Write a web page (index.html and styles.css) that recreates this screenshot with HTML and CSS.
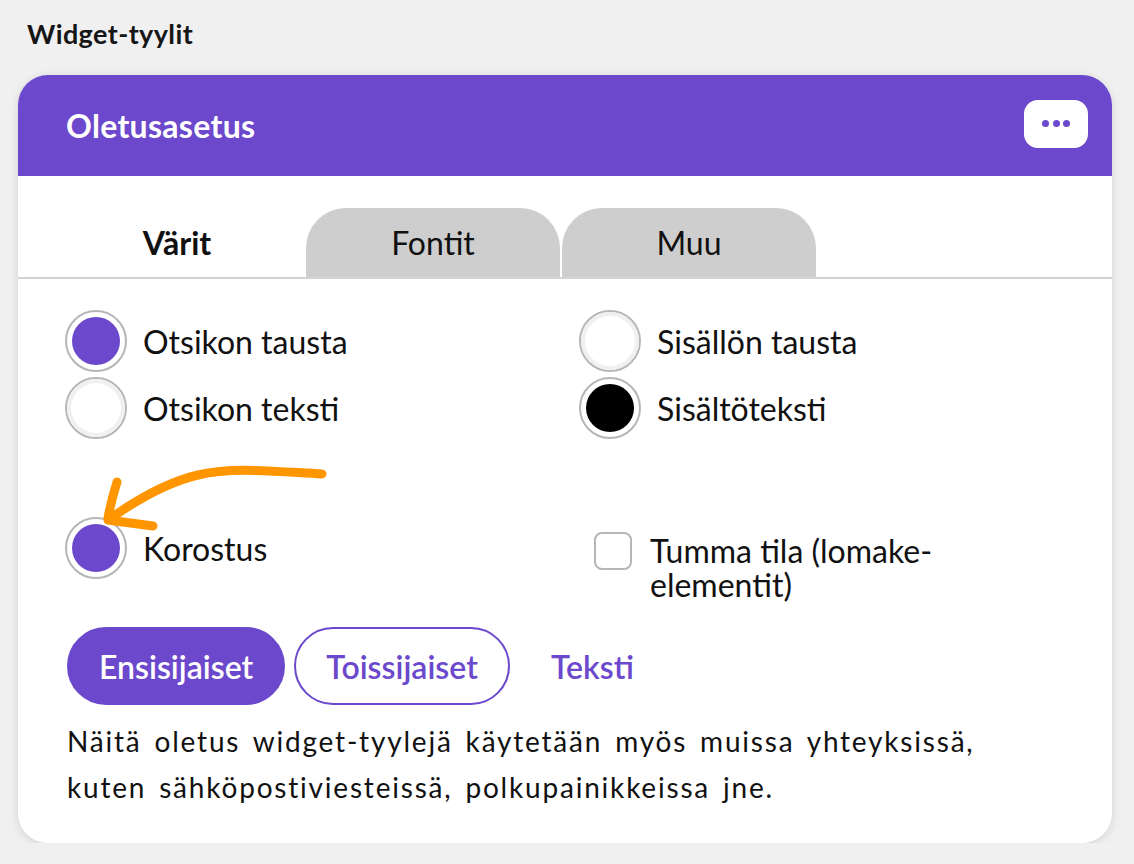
FILE: index.html
```html
<!DOCTYPE html>
<html lang="fi">
<head>
<meta charset="utf-8">
<title>Widget-tyylit</title>
<link rel="stylesheet" href="styles.css">
</head>
<body>
<h1 class="page-title">Widget-tyylit</h1>
<div class="card">
  <div class="card-header">
    <span class="card-title">Oletusasetus</span>
    <button class="menu-btn" type="button" aria-label="Lisää"><span class="dot"></span><span class="dot"></span><span class="dot"></span></button>
  </div>
  <div class="tabs">
    <div class="tab active">Värit</div>
    <div class="tab">Fontit</div>
    <div class="tab">Muu</div>
  </div>
  <div class="card-body">
    <div class="swatch-grid">
      <div class="swatch-item"><span class="swatch"><span class="fill purple"></span></span><span class="label">Otsikon tausta</span></div>
      <div class="swatch-item"><span class="swatch"><span class="fill white"></span></span><span class="label">Sisällön tausta</span></div>
      <div class="swatch-item"><span class="swatch"><span class="fill white"></span></span><span class="label">Otsikon teksti</span></div>
      <div class="swatch-item"><span class="swatch"><span class="fill black"></span></span><span class="label">Sisältöteksti</span></div>
    </div>
    <div class="swatch-grid accent-row">
      <div class="swatch-item"><span class="swatch"><span class="fill purple"></span></span><span class="label">Korostus</span></div>
      <div class="check-item"><span class="checkbox"></span><span class="check-label">Tumma tila (lomake-elementit)</span></div>
    </div>
    <div class="buttons">
      <button class="btn primary" type="button">Ensisijaiset</button>
      <button class="btn secondary" type="button">Toissijaiset</button>
      <button class="btn text" type="button">Teksti</button>
    </div>
    <p class="note">Näitä oletus widget-tyylejä käytetään myös muissa yhteyksissä,<br>kuten sähköpostiviesteissä, polkupainikkeissa jne.</p>
  </div>
  <svg class="annotation" width="340" height="480" viewBox="0 0 340 480" aria-hidden="true">
    <path d="M304 399 C250 396 215 392 180 400 C150 407 120 424 93 443" fill="none" stroke="#ff9600" stroke-width="9" stroke-linecap="round"/>
    <path d="M99 407 C95 420 92 432 90 443" fill="none" stroke="#ff9600" stroke-width="9" stroke-linecap="round"/>
    <path d="M90 445 L135 451" fill="none" stroke="#ff9600" stroke-width="9" stroke-linecap="round"/>
  </svg>
</div>
</body>
</html>
```

FILE: styles.css
```css
* { box-sizing: border-box; }

html, body {
  margin: 0;
  background: #f0f0f0;
}

body {
  padding: 18px 22px 0 18px;
  font-family: Lato, "Open Sans", sans-serif;
  color: #111;
}

.page-title {
  margin: 0 0 25px 9px;
  font-size: 27px;
  line-height: 32px;
  font-weight: 700;
  letter-spacing: 0.4px;
  color: #161616;
}

.card {
  position: relative;
  width: 1094px;
  background: #fff;
  border-radius: 30px;
  overflow: hidden;
  box-shadow: 0 2px 10px rgba(0, 0, 0, 0.12);
}

.card-header {
  height: 101px;
  background: #6b48cc;
  display: flex;
  align-items: center;
  justify-content: space-between;
  padding: 0 24px 0 48px;
}

.card-title {
  color: #fff;
  font-size: 32px;
  font-weight: 700;
  letter-spacing: 0.3px;
}

.menu-btn {
  width: 64px;
  height: 48px;
  border: none;
  border-radius: 14px;
  background: #fff;
  display: flex;
  align-items: center;
  justify-content: center;
  gap: 3.5px;
  padding: 0;
  margin-top: -4px;
}

.dot {
  width: 7px;
  height: 7px;
  border-radius: 50%;
  background: #6b48cc;
}

.tabs {
  display: flex;
  gap: 2px;
  padding: 32px 0 0 32px;
  border-bottom: 2px solid #d3d3d3;
}

.tab {
  width: 254px;
  height: 69px;
  border-radius: 40px 40px 0 0;
  background: #cecece;
  display: flex;
  align-items: center;
  justify-content: center;
  font-size: 32px;
  color: #111;
}

.tab.active {
  background: transparent;
  font-weight: 700;
}

.card-body {
  padding: 31px 40px 33px 47px;
}

.swatch-grid {
  display: grid;
  grid-template-columns: 514px 1fr;
  row-gap: 5px;
}

.swatch-item {
  display: flex;
  align-items: center;
  gap: 16px;
  font-size: 32px;
}

.swatch {
  width: 62px;
  height: 62px;
  border-radius: 50%;
  border: 2px solid #b6b6b6;
  background: #fff;
  display: flex;
  align-items: center;
  justify-content: center;
  flex: none;
}

.fill {
  width: 48px;
  height: 48px;
  border-radius: 50%;
}

.fill.purple { background: #6b48cc; }
.fill.black { background: #000; }
.fill.white {
  background: #fff;
  width: 50px;
  height: 50px;
  box-shadow: 0 0 0 4px #f0f0f0;
}

.accent-row {
  margin-top: 78px;
  align-items: start;
}

.check-item {
  display: flex;
  align-items: flex-start;
  gap: 18px;
  padding: 15px 0 0 15px;
}

.checkbox {
  width: 38px;
  height: 38px;
  border: 2px solid #b6b6b6;
  border-radius: 8px;
  flex: none;
}

.check-label {
  max-width: 310px;
  font-size: 32px;
  line-height: 34px;
  margin-top: 2px;
}

.buttons {
  display: flex;
  gap: 9px;
  margin: 25px 0 0 2px;
}

.btn {
  height: 78px;
  padding: 0 30px;
  border-radius: 39px;
  font-family: Lato, "Open Sans", sans-serif;
  font-size: 32px;
  font-weight: 600;
  border: 2px solid transparent;
  background: transparent;
  color: #6b48cc;
}

.btn.primary {
  background: #6b48cc;
  border-color: #6b48cc;
  color: #fff;
}

.btn.secondary {
  border-color: #6b48cc;
  background: #fff;
}

.note {
  margin: 13px 0 0 2px;
  font-size: 28px;
  line-height: 46px;
  letter-spacing: 1.8px;
  word-spacing: 4px;
  color: #111;
}

.annotation {
  position: absolute;
  left: 0;
  top: 0;
  pointer-events: none;
}
```
